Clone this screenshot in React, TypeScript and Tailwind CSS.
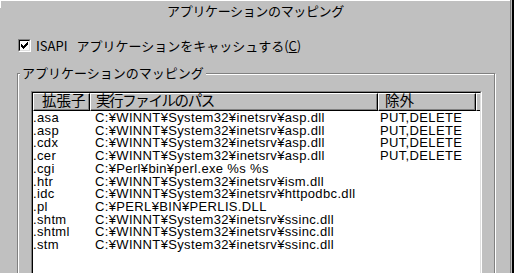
const mappings = [
  ['.asa', 'C:¥WINNT¥System32¥inetsrv¥asp.dll', 'PUT,DELETE'],
  ['.asp', 'C:¥WINNT¥System32¥inetsrv¥asp.dll', 'PUT,DELETE'],
  ['.cdx', 'C:¥WINNT¥System32¥inetsrv¥asp.dll', 'PUT,DELETE'],
  ['.cer', 'C:¥WINNT¥System32¥inetsrv¥asp.dll', 'PUT,DELETE'],
  ['.cgi', 'C:¥Perl¥bin¥perl.exe %s %s', ''],
  ['.htr', 'C:¥WINNT¥System32¥inetsrv¥ism.dll', ''],
  ['.idc', 'C:¥WINNT¥System32¥inetsrv¥httpodbc.dll', ''],
  ['.pl', 'C:¥PERL¥BIN¥PERLIS.DLL', ''],
  ['.shtm', 'C:¥WINNT¥System32¥inetsrv¥ssinc.dll', ''],
  ['.shtml', 'C:¥WINNT¥System32¥inetsrv¥ssinc.dll', ''],
  ['.stm', 'C:¥WINNT¥System32¥inetsrv¥ssinc.dll', ''],
];

function HeaderCell({ label, className }: { label: string; className: string }) {
  return (
    <div
      className={`flex h-[18px] items-start border-t border-l border-r border-b border-t-white border-l-white border-r-black border-b-black bg-[#c0c0c0] shadow-[inset_-1px_-1px_0_#808080] ${className}`}
    >
      <span className="-mt-[1px] whitespace-nowrap text-[14.5px] leading-[14px]">{label}</span>
    </div>
  );
}

function CheckBox() {
  return (
    <div className="h-[13px] w-[13px] border border-t-[#808080] border-l-[#808080] border-r-white border-b-white">
      <div className="flex h-full w-full items-center justify-center border border-t-black border-l-black border-r-[#dfdfdf] border-b-[#dfdfdf] bg-white">
        <svg width="7" height="7" viewBox="0 0 7 7" shapeRendering="crispEdges">
          <path
            fill="#000"
            d="M6 0h1v1H6z M5 1h2v1H5z M0 2h1v1H0z M4 2h3v1H4z M0 3h2v1H0z M3 3h3v1H3z M0 4h5v1H0z M1 5h3v1H1z M2 6h1v1H2z"
          />
        </svg>
      </div>
    </div>
  );
}

export default function App() {
  return (
    <div className="flex h-[273px] w-[514px] overflow-hidden bg-[#c0c0c0] font-['Noto_Sans_CJK_JP',sans-serif] text-black">
      <div className="flex w-[510px] flex-col border-t border-white">
        {/* Title */}
        <div className="flex">
          <div className="h-[7px] w-px bg-white" />
          <div className="flex-1 pt-[2px] text-center text-[13px] leading-[16px] tracking-[-0.35px]">
            アプリケーションのマッピング
          </div>
        </div>

        {/* Cache checkbox */}
        <div className="ml-[18px] mt-[20px] flex h-[13px] items-center">
          <CheckBox />
          <span className="ml-[5px] whitespace-nowrap text-[13px] leading-[13px]">
            <span className="mr-[6px]">ISAPI</span> アプリケーションをキャッシュする(<span className="underline">C</span>)
          </span>
        </div>

        {/* Group box */}
        <div className="ml-[17px] mt-[21px] h-[320px] w-[478px] shrink-0 border border-[#808080] shadow-[inset_1px_1px_0_#fff,1px_1px_0_#fff]">
          <div className="-mt-[9px] ml-[2px] w-fit bg-[#c0c0c0] px-[2px] text-[13px] leading-[16px]">
            アプリケーションのマッピング
          </div>

          {/* List view */}
          <div className="ml-[13px] mt-[10px] w-[451px] border border-t-[#808080] border-l-[#808080] border-r-white border-b-white">
            <div className="h-[300px] border border-t-black border-l-black border-r-[#dfdfdf] border-b-[#dfdfdf] bg-white">
              <div className="flex">
                <HeaderCell label="拡張子" className="w-[57px] pl-[8px]" />
                <HeaderCell label="実行ファイルのパス" className="w-[288px] pl-[5px] tracking-[-1.4px]" />
                <HeaderCell label="除外" className="w-[98px] pl-[6px]" />
                <div className="h-[18px] flex-1 border-t border-l border-b border-t-white border-l-white border-b-black bg-[#c0c0c0]" />
              </div>
              <div className="pt-[1px] font-['Liberation_Sans',sans-serif] text-[13px] leading-[12.7px] tracking-[0.35px]">
                {mappings.map(([ext, path, verbs]) => (
                  <div key={ext} className="flex whitespace-nowrap">
                    <div className="w-[57px]">{ext}</div>
                    <div className="w-[288px] pl-[5px]">{path}</div>
                    <div className="w-[98px] pl-[2px]">{verbs}</div>
                  </div>
                ))}
              </div>
            </div>
          </div>
        </div>
      </div>

      {/* Right window edge */}
      <div className="w-px bg-[#808080]" />
      <div className="w-px" />
      <div className="w-[2px] bg-black" />
    </div>
  );
}
